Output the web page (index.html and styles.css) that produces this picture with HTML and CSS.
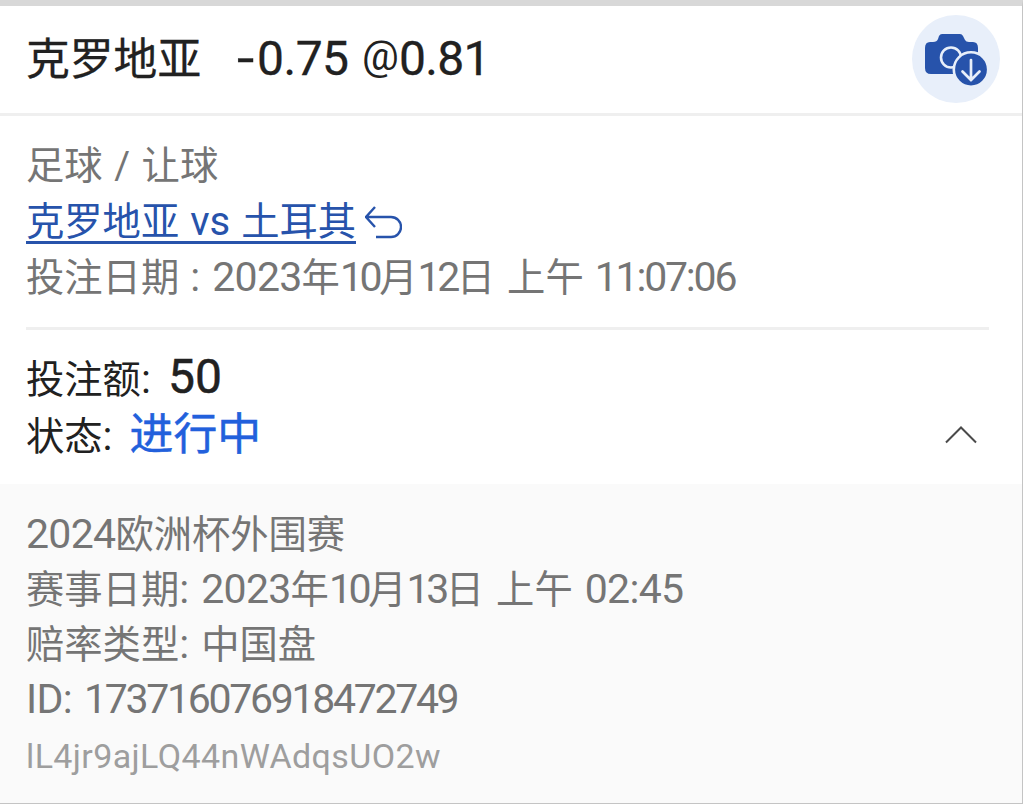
FILE: index.html
```html
<!DOCTYPE html>
<html lang="zh-CN">
<head>
<meta charset="utf-8">
<title>投注详情</title>
<link rel="stylesheet" href="styles.css">
</head>
<body>
<main class="ticket">
  <header class="head">
    <h1 class="title"><span class="team">克罗地亚</span><span class="odds"><b class="minus">-</b>0.75</span><span class="at">@</span><span class="price">0.81</span></h1>
    <button class="shot" aria-label="截图">
      <svg width="88" height="88" viewBox="0 0 88 88" fill="none">
        <path d="M18 27h3q4 0 5-3l1-3q1-2 3-2h18q2 0 3 2l2 4q1 2 4 2h4q5 0 5 6v20q0 6-6 6H19q-6 0-6-6V33q0-6 5-6Z" fill="#2753ab"/>
        <circle cx="39" cy="42.500" r="10" stroke="#e8effa" stroke-width="2.6"/>
        <circle cx="59" cy="54.500" r="17.2" fill="#2753ab" stroke="#e8effa" stroke-width="2.6"/>
        <path d="M59 45v20M50.500 56.500l8.500 8.500 8.500-8.500" stroke="#e8effa" stroke-width="2.7" stroke-linecap="round"/>
      </svg>
    </button>
  </header>
  <section class="match">
    <p class="line">足球<span class="slash">/</span>让球</p>
    <p class="line"><a class="link">克罗地亚<span class="vs">vs</span>土耳其</a><svg class="back" width="37" height="34" viewBox="0 0 37 34" fill="none" stroke="#2753ab" stroke-width="2.4"><path d="M10 1 1 11l9 10M1.500 11H26a10 10 0 0 1 0 20H11"/></svg></p>
    <p class="line">投注日期<span class="colon wide">:</span><span class="num">2023</span>年<span class="num tens">10</span>月<span class="num tens">12</span>日<span class="gap"></span>上午<span class="gap"></span><span class="num clock">11:07:06</span></p>
  </section>
  <section class="status">
    <div class="info">
      <p class="line">投注额<span class="colon">:</span><span class="stake">50</span></p>
      <p class="line">状态<span class="colon">:</span><span class="running">进行中</span></p>
    </div>
    <svg class="chevron" width="32" height="18" viewBox="0 0 32 18" fill="none" stroke="#4a4a4a" stroke-width="2"><path d="m1 16.500 15-15 15 15"/></svg>
  </section>
  <section class="details">
    <p class="line"><span class="num">2024</span>欧洲杯外围赛</p>
    <p class="line">赛事日期<span class="colon">:</span><span class="num">2023</span>年<span class="num tens">10</span>月<span class="num tens">13</span>日<span class="gap"></span>上午<span class="gap"></span><span class="num">02:45</span></p>
    <p class="line">赔率类型<span class="colon">:</span>中国盘</p>
    <p class="line ticket-id"><span class="num id">ID:</span><span class="num serial">173716076918472749</span></p>
    <p class="line code">lL4jr9ajLQ44nWAdqsUO2w</p>
  </section>
</main>
</body>
</html>
```
FILE: styles.css
```css
* { box-sizing: border-box; margin: 0; padding: 0; }
body { background: #fff; font-family: "Noto Sans CJK SC", sans-serif; }
b { font-weight: inherit; }
.ticket {
  width: 1023px; height: 804px;
  display: flex; flex-direction: column;
  border-top: 6px solid #d8d8d8;
  border-right: 1px solid #c4c4c4;
  border-bottom: 1px solid #c4c4c4;
  background: #fff; color: #212121;
}
.head {
  height: 110px; flex: none;
  display: flex; justify-content: space-between; align-items: center;
  padding: 0 22px 2px 26px;
  border-bottom: 3px solid #efefef;
}
.title {
  display: flex; align-items: baseline;
  font-size: 43.800px; line-height: 58px; font-weight: 400;
  margin-bottom: 3px;
  -webkit-text-stroke: 0.300px currentColor;
}
.team { width: 211px; }
.odds, .at, .price { font-family: Roboto, sans-serif; font-size: 48px; }
.odds { width: 125px; letter-spacing: -0.500px; }
.minus { display: inline-block; width: 20px; transform: scaleX(1.300); transform-origin: left; }
.at { width: 37px; font-size: 41px; align-self: flex-start; margin-top: 0; -webkit-text-stroke: 0; }
.price { letter-spacing: -0.700px; }
.shot {
  width: 88px; height: 88px; border: 0; border-radius: 50%;
  background: #e8effa; flex: none;
}
.shot svg { display: block; }
.match {
  height: 214px; flex: none;
  margin: 0 33px 0 26px; padding-top: 19px;
  border-bottom: 3px solid #efefef;
  color: #757575;
}
.line {
  height: 56px; display: flex; align-items: baseline;
  font-size: 38.300px; line-height: 56px; white-space: nowrap;
}
.slash { width: 39px; text-align: center; font-family: Roboto, sans-serif; }
.link { display: flex; align-items: baseline; height: 53px; line-height: 56px; border-bottom: 3px solid #2753ab; color: #2753ab; }
.vs { width: 62px; text-align: center; font-family: Roboto, sans-serif; font-size: 40px; }
.back { margin-left: 9px; align-self: flex-start; margin-top: 15px; }
.num, .colon { font-family: Roboto, sans-serif; font-size: 41px; letter-spacing: -0.700px; }
.num.tens { letter-spacing: -3.400px; }
.num.clock { margin-left: -1px; letter-spacing: -2.200px; }
.colon { width: 22px; }
.wide { width: 33px; padding-left: 11px; }
.gap { width: 12px; }
.status {
  height: 154px; flex: none;
  display: flex; justify-content: space-between;
  padding: 20px 45px 0 26px;
}
.info .line { height: 54px; line-height: 54px; }
.stake { margin-left: 5px; font-family: Roboto, sans-serif; font-size: 48px; -webkit-text-stroke: 0.500px currentColor; }
.running { margin-left: 5px; font-size: 43.800px; color: #2260dc; -webkit-text-stroke: 0.500px currentColor; }
.chevron { margin-top: 76px; }
.details { flex: 1; padding: 20px 26px 0; background: #fafafa; color: #757575; }
.details .line { height: 55px; line-height: 55px; }
.details .ticket-id { line-height: 60px; }
.id { width: 58px; }
.num.serial { letter-spacing: -2.300px; }
.details .code { font-family: Roboto, sans-serif; font-size: 34px; letter-spacing: 0.380px; color: #9e9e9e; line-height: 64px; }
```
